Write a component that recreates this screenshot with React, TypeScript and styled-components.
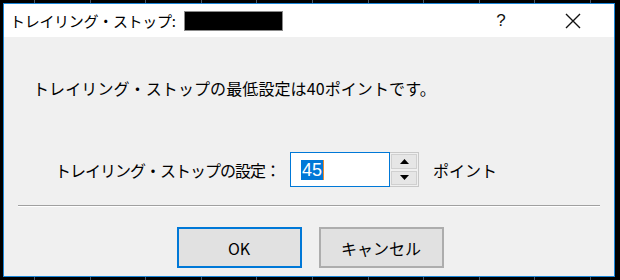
import styled, { createGlobalStyle } from "styled-components"

const GlobalStyle = createGlobalStyle`
html, body {
  margin: 0;
  padding: 0;
  background: #000;
}
body {
  font-family: "Noto Sans CJK JP", "Liberation Sans", sans-serif;
}
`

const App = () => {
  return (
    <>
      <GlobalStyle />
      <Desktop>
        <Dialog>
          <TitleBar>
            <Title>トレイリング・ストップ:</Title>
            <Redacted />
            <TitleButtons>
              <HelpButton>?</HelpButton>
              <CloseButton>
                <svg width="16" height="16" viewBox="0 0 16 16">
                  <path d="M1 1 L15 15 M15 1 L1 15" stroke="#111" strokeWidth="1.4" fill="none" />
                </svg>
              </CloseButton>
            </TitleButtons>
          </TitleBar>
          <Body>
            <Message>トレイリング・ストップの最低設定は40ポイントです。</Message>
            <SettingRow>
              <Label>トレイリング・ストップの設定：</Label>
              <SpinBox>
                <Input>
                  <Selected>45</Selected>
                  <Caret />
                </Input>
                <Spinner>
                  <SpinButton>
                    <svg width="9" height="5" viewBox="0 0 9 5"><path d="M4.5 0 L9 5 L0 5 Z" fill="#000" /></svg>
                  </SpinButton>
                  <SpinButton>
                    <svg width="9" height="5" viewBox="0 0 9 5"><path d="M0 0 L9 0 L4.5 5 Z" fill="#000" /></svg>
                  </SpinButton>
                </Spinner>
              </SpinBox>
              <Unit>ポイント</Unit>
            </SettingRow>
            <Separator />
            <ButtonRow>
              <Button $default>OK</Button>
              <Button>キャンセル</Button>
            </ButtonRow>
          </Body>
        </Dialog>
      </Desktop>
    </>
  )
}

export default App

const Desktop = styled.div`
width: 620px;
height: 280px;
box-sizing: border-box;
padding: 3px 5px 3px 3px;
overflow: hidden;
background-color: #000;
background-image: repeating-linear-gradient(90deg, transparent 0 34px, #4a5866 34px 35px, transparent 35px 55.6px);
display: flex;
`
const Dialog = styled.div`
flex: 1;
display: flex;
flex-direction: column;
border: 1px solid #1a86d9;
background: #f0f0f0;
`
const TitleBar = styled.div`
height: 33px;
background: #fff;
display: flex;
align-items: center;
padding-left: 6px;
`
const Title = styled.div`
font-size: 15px;
color: #000;
letter-spacing: -0.3px;
`
const Redacted = styled.div`
width: 97px;
height: 18px;
background: #000;
border: 1px solid #8a8a8a;
margin-left: 8px;
`
const TitleButtons = styled.div`
margin-left: auto;
display: flex;
height: 100%;
`
const HelpButton = styled.div`
width: 46px;
display: flex;
justify-content: center;
align-items: center;
font-family: "Liberation Sans", sans-serif;
font-size: 17px;
color: #111;
margin-right: 26px;
`
const CloseButton = styled.div`
width: 46px;
margin-right: 18px;
display: flex;
justify-content: center;
align-items: center;
`
const Body = styled.div`
flex: 1;
display: flex;
flex-direction: column;
padding: 0 14px;
`
const Message = styled.div`
font-size: 16px;
color: #000;
margin-top: 40px;
padding-left: 15px;
letter-spacing: 0.1px;
line-height: 22px;
`
const SettingRow = styled.div`
display: flex;
align-items: center;
margin-top: 53px;
padding-left: 37px;
`
const Label = styled.div`
font-size: 16px;
color: #000;
letter-spacing: -1px;
width: 235px;
`
const SpinBox = styled.div`
display: flex;
height: 35px;
`
const Input = styled.div`
width: 88px;
border: 1px solid #0078d7;
background: #fff;
display: flex;
align-items: center;
padding-left: 10px;
`
const Selected = styled.span`
background: #0078d7;
color: #fff;
font-family: "Liberation Sans", sans-serif;
font-size: 18px;
line-height: 20px;
padding: 0 1px;
`
const Caret = styled.span`
width: 1px;
height: 20px;
background: #f08a2a;
`
const Spinner = styled.div`
width: 28px;
border: 1px solid #c8c8c8;
border-left: none;
background: #f0f0f0;
display: flex;
flex-direction: column;
`
const SpinButton = styled.div`
flex: 1;
display: flex;
justify-content: center;
align-items: center;
margin: 1px;
background: #e6e6e6;
border: 1px solid #d0d0d0;
`
const Unit = styled.div`
font-size: 16px;
color: #000;
margin-left: 14px;
`
const Separator = styled.div`
height: 1px;
background: #a0a0a0;
border-bottom: 1px solid #fff;
margin: 18px 0 0 0;
`
const ButtonRow = styled.div`
display: flex;
justify-content: center;
gap: 17px;
margin-top: 20px;
padding-left: 2px;
`
const Button = styled.div<{ $default?: boolean }>`
width: 121px;
height: 37px;
box-sizing: content-box;
display: flex;
justify-content: center;
align-items: center;
background: #e1e1e1;
border: ${(p) => (p.$default ? "2px solid #0078d7" : "2px solid #adadad")};
font-size: 16px;
color: #000;
`
